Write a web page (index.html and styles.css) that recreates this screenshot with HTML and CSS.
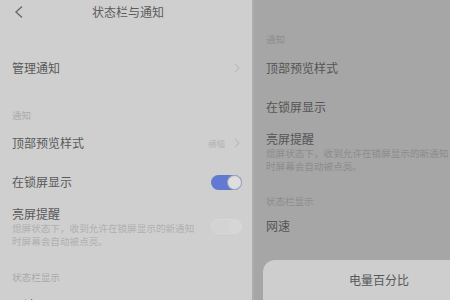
FILE: index.html
```html
<!DOCTYPE html>
<html lang="zh">
<head>
<meta charset="utf-8">
<link rel="stylesheet" href="styles.css">
</head>
<body>
<div class="screen">
  <section class="left">
    <header class="topbar">
      <svg class="back" width="12" height="14" viewBox="0 0 12 14"><path d="M9 1.5 L3 7 L9 12.5" fill="none" stroke="#6a6a6a" stroke-width="1.4"/></svg>
      <div class="title">状态栏与通知</div>
    </header>
    <div class="row manage">
      <span class="label">管理通知</span>
      <svg class="chev" width="6" height="10" viewBox="0 0 6 10"><path d="M1 1 L5 5 L1 9" fill="none" stroke="#bdbdbd" stroke-width="1.2"/></svg>
    </div>
    <div class="section">通知</div>
    <div class="row r1">
      <span class="label">顶部预览样式</span>
      <span class="value">横幅
        <svg class="chev" width="6" height="10" viewBox="0 0 6 10"><path d="M1 1 L5 5 L1 9" fill="none" stroke="#bdbdbd" stroke-width="1.2"/></svg>
      </span>
    </div>
    <div class="row r2">
      <span class="label">在锁屏显示</span>
      <span class="toggle on"><span class="knob"></span></span>
    </div>
    <div class="block">
      <div class="btext">
        <div class="label">亮屏提醒</div>
        <div class="desc">熄屏状态下，收到允许在锁屏显示的新通知<br>时屏幕会自动被点亮。</div>
      </div>
      <span class="toggle off"><span class="knob"></span></span>
    </div>
    <div class="section s2">状态栏显示</div>
    <div class="label speed">网速</div>
  </section>
  <section class="right">
    <div class="rsection">通知</div>
    <div class="rlabel rr1">顶部预览样式</div>
    <div class="rlabel rr2">在锁屏显示</div>
    <div class="rlabel rr3">亮屏提醒</div>
    <div class="rdesc">熄屏状态下，收到允许在锁屏显示的新通知<br>时屏幕会自动被点亮。</div>
    <div class="rsection rs2">状态栏显示</div>
    <div class="rlabel rr4">网速</div>
    <div class="dialog">
      <div class="dtitle">电量百分比</div>
    </div>
  </section>
</div>
</body>
</html>
```
FILE: styles.css
```css
* { box-sizing: border-box; }
html, body { margin: 0; padding: 0; }
body {
  width: 450px;
  height: 300px;
  overflow: hidden;
  font-family: "Noto Sans CJK SC", "Noto Sans", sans-serif;
  background: #cfcfcf;
}
.screen {
  display: flex;
  width: 450px;
  height: 300px;
}
.left {
  width: 252px;
  flex: none;
  background: #cfcfcf;
  padding: 0 10px 0 12px;
  overflow: hidden;
}
.topbar {
  height: 24px;
  display: flex;
  align-items: center;
  position: relative;
}
.back { margin-left: 1px; }
.title {
  position: absolute;
  left: 0; right: 0;
  text-align: center;
  font-size: 12px;
  color: #5c5c5c;
  line-height: 24px;
  padding-left: 2px;
}
.row {
  display: flex;
  align-items: center;
  justify-content: space-between;
}
.label {
  font-size: 12px;
  line-height: 14px;
  color: #595959;
}
.manage { height: 40px; margin-top: 24px; }
.manage .chev { margin-right: 2px; }
.section {
  font-size: 9.5px;
  color: #aaaaaa;
  line-height: 18px;
  height: 18px;
  margin-top: 18px;
}
.r1 { height: 38px; }
.value {
  font-size: 8.5px;
  color: #b4b4b4;
  display: flex;
  align-items: center;
  gap: 9px;
  margin-right: 2px;
}
.r2 { height: 40px; }
.toggle {
  width: 31px;
  height: 15px;
  border-radius: 8px;
  position: relative;
  flex: none;
}
.toggle.on { background: #6179d0; }
.toggle.on .knob {
  position: absolute;
  right: 1px; top: 1px;
  width: 13px; height: 13px;
  border-radius: 50%;
  background: #dedede;
  box-shadow: 0 0 0 1px #a9a9b6;
}
.toggle.off { background: #d3d3d3; border: 1px solid #d9d9d9; margin-top: 12px; }
.toggle.off .knob {
  position: absolute;
  right: 0; top: 0;
  width: 13px; height: 13px;
  border-radius: 50%;
  background: #d6d6d6;
}
.block {
  display: flex;
  justify-content: space-between;
  align-items: flex-start;
  margin-top: 5px;
}
.desc {
  font-size: 9.6px;
  line-height: 13px;
  color: #afafaf;
  margin-top: 1px;
  white-space: nowrap;
}
.s2 { margin-top: 20px; font-size: 9.6px; }
.speed { margin-top: 12px; }

.right {
  flex: 1;
  background: #a6a6a6;
  padding-left: 12px;
  position: relative;
  overflow: hidden;
  border-left: 2px solid #acacac;
  white-space: nowrap;
}
.rsection {
  font-size: 9.5px;
  color: #8d8d8d;
  line-height: 18px;
  margin-top: 30px;
}
.rlabel {
  font-size: 12px;
  line-height: 14px;
  color: #555555;
}
.rr1 { margin-top: 13px; }
.rr2 { margin-top: 25px; }
.rr3 { margin-top: 18px; }
.rdesc {
  font-size: 9.6px;
  line-height: 13px;
  color: #8c8c8c;
  margin-top: 1px;
}
.rs2 { margin-top: 19px; }
.rr4 { margin-top: 9px; }
.dialog {
  position: absolute;
  left: 9px;
  top: 260px;
  width: 232px;
  height: 60px;
  background: #cecece;
  border-radius: 12px;
}
.dtitle {
  text-align: center;
  font-size: 12px;
  color: #575757;
  margin-top: 12px;
  line-height: 16px;
}
```
